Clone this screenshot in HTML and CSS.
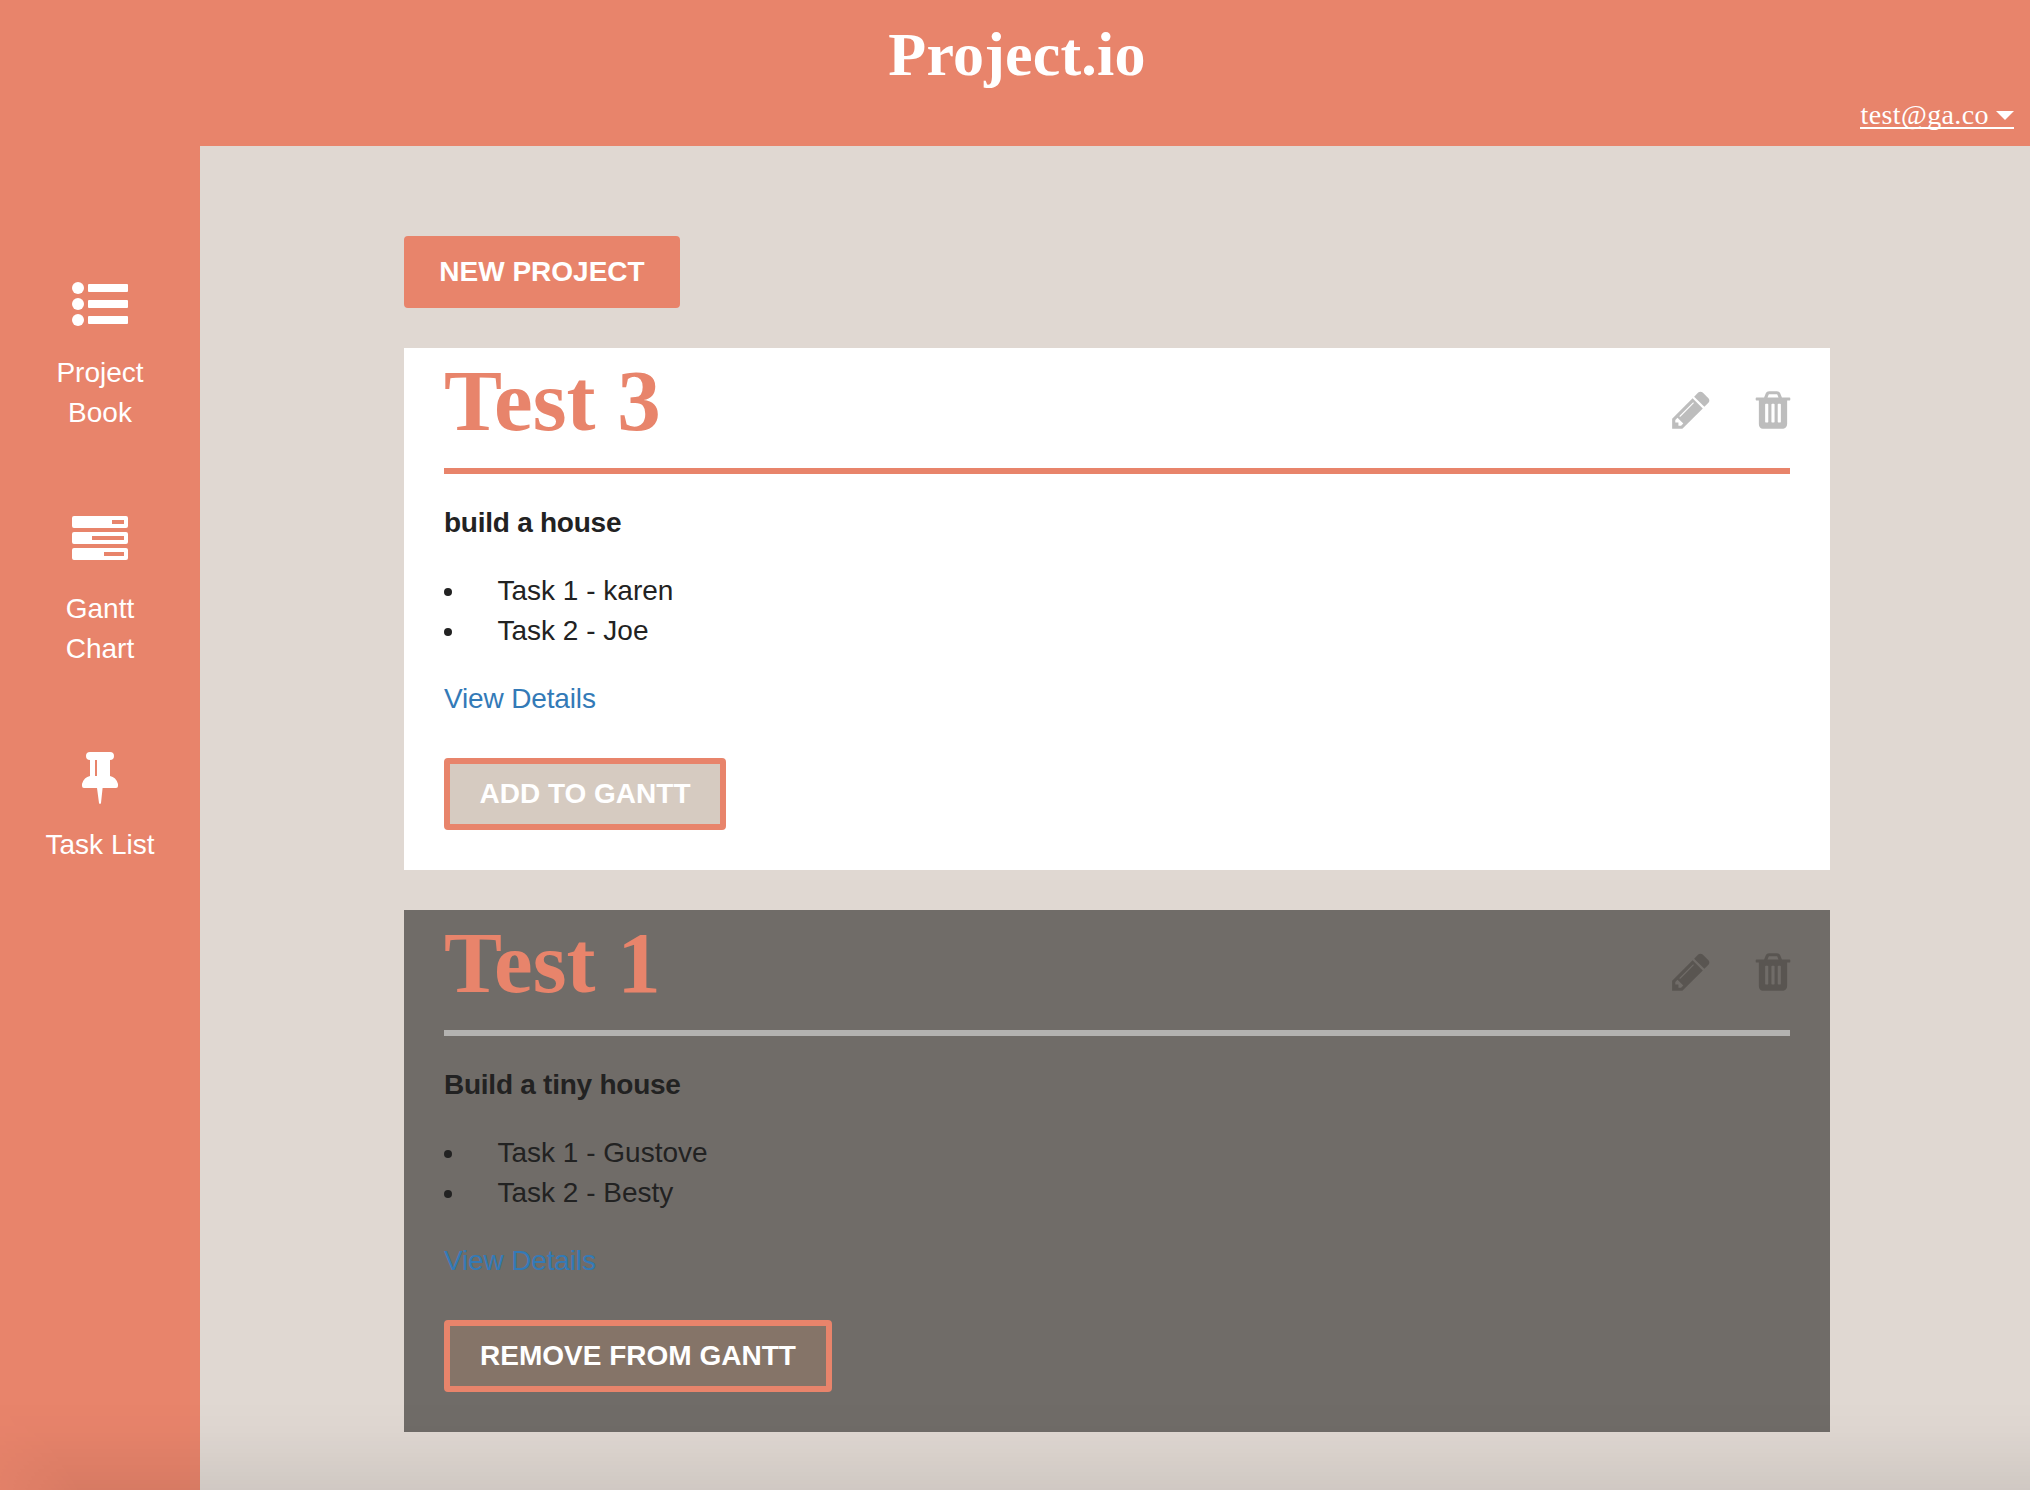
FILE: index.html
```html
<!DOCTYPE html>
<html lang="en">
<head>
<meta charset="utf-8">
<title>Project.io</title>
<link rel="stylesheet" href="styles.css">
</head>
<body>
<svg width="0" height="0" class="sprite" aria-hidden="true">
  <symbol id="pencil" viewBox="0 0 1792 1792"><path d="M491 1536l91-91-235-235-91 91v107h128v128h107zm523-928q0-22-22-22-10 0-17 7l-542 542q-7 7-7 17 0 22 22 22 10 0 17-7l542-542q7-7 7-17zm-54-192l416 416-832 832h-416v-416zm683 96q0 53-37 90l-166 166-416-416 166-165q36-38 90-38 53 0 91 38l235 234q37 39 37 91z"/></symbol>
  <symbol id="trash" viewBox="0 0 1792 1792"><path d="M704 1376v-704q0-14-9-23t-23-9h-64q-14 0-23 9t-9 23v704q0 14 9 23t23 9h64q14 0 23-9t9-23zm256 0v-704q0-14-9-23t-23-9h-64q-14 0-23 9t-9 23v704q0 14 9 23t23 9h64q14 0 23-9t9-23zm256 0v-704q0-14-9-23t-23-9h-64q-14 0-23 9t-9 23v704q0 14 9 23t23 9h64q14 0 23-9t9-23zm-544-992h448l-48-117q-7-9-17-11h-317q-10 2-17 11zm928 32v64q0 14-9 23t-23 9h-96v948q0 83-47 143.500t-113 60.500h-832q-66 0-113-58.500t-47-141.500v-952h-96q-14 0-23-9t-9-23v-64q0-14 9-23t23-9h309l70-167q15-37 54-63t79-26h320q40 0 79 26t54 63l70 167h309q14 0 23 9t9 23z"/></symbol>
</svg>
<header class="header">
  <h1 class="brand">Project.io</h1>
  <a class="account"><span class="account-name">test@ga.co</span><span class="caret"></span></a>
</header>
<div class="layout">
  <nav class="sidebar">
    <a class="nav-item">
      <svg class="nav-icon" width="56" height="52" viewBox="0 0 56 52"><circle cx="6" cy="8" r="6"/><circle cx="6" cy="24" r="6"/><circle cx="6" cy="40" r="6"/><rect x="16" y="4" width="40" height="8" rx="1"/><rect x="16" y="20" width="40" height="8" rx="1"/><rect x="16" y="36" width="40" height="8" rx="1"/></svg>
      <span>Project<br>Book</span>
    </a>
    <a class="nav-item">
      <svg class="nav-icon" width="56" height="52" viewBox="0 0 56 52"><path fill-rule="evenodd" d="M2 0H54a2 2 0 0 1 2 2V10a2 2 0 0 1-2 2H2a2 2 0 0 1-2-2V2a2 2 0 0 1 2-2zM40 4V8H52V4zM2 16H54a2 2 0 0 1 2 2V26a2 2 0 0 1-2 2H2a2 2 0 0 1-2-2V18a2 2 0 0 1 2-2zM20 20V24H52V20zM2 32H54a2 2 0 0 1 2 2V42a2 2 0 0 1-2 2H2a2 2 0 0 1-2-2V34a2 2 0 0 1 2-2zM32 36V40H52V36z"/></svg>
      <span>Gantt<br>Chart</span>
    </a>
    <a class="nav-item">
      <svg class="nav-icon" width="56" height="52" viewBox="0 0 56 52"><path fill-rule="evenodd" d="M18 0H38a4 4 0 0 1 0 8V24Q44 25 46 32V34Q46 36 44 36H30.600L29 51Q28 53 27 51L25 36H12Q10 36 10 34V32Q12 25 18 24V8a4 4 0 0 1 0-8zM23 8V24H25V8z"/></svg>
      <span>Task List</span>
    </a>
  </nav>
  <main class="content">
    <button class="btn btn-new">NEW PROJECT</button>
    <article class="card">
      <div class="card-head"><h2 class="card-title">Test 3</h2><div class="actions"><svg class="action"><use href="#pencil"/></svg><svg class="action"><use href="#trash"/></svg></div></div>
      <p class="summary">build a house</p>
      <ul class="tasks"><li>Task 1 - karen</li><li>Task 2 - Joe</li></ul>
      <a class="details">View Details</a>
      <button class="btn btn-add">ADD TO GANTT</button>
    </article>
    <article class="card card-dark">
      <div class="card-head"><h2 class="card-title">Test 1</h2><div class="actions"><svg class="action"><use href="#pencil"/></svg><svg class="action"><use href="#trash"/></svg></div></div>
      <p class="summary">Build a tiny house</p>
      <ul class="tasks"><li>Task 1 - Gustove</li><li>Task 2 - Besty</li></ul>
      <a class="details">View Details</a>
      <button class="btn btn-remove">REMOVE FROM GANTT</button>
    </article>
  </main>
</div>
<div class="bottom-shade"></div>
</body>
</html>
```
FILE: styles.css
```css
* { box-sizing: border-box; }
body {
  position: relative;
  display: flex;
  flex-direction: column;
  height: 1490px;
  margin: 0;
  overflow: hidden;
  background: #e0d8d2;
  color: #222;
  font: 28px/40px "Liberation Sans", Arial, sans-serif;
}
.sprite { display: none; }
h1, h2, p, ul { margin: 0; padding: 0; }
.header {
  display: flex;
  flex-direction: column;
  height: 146px;
  background: #e8846b;
  color: #fff;
  font-family: "Liberation Serif", serif;
}
.brand {
  height: 96px;
  padding: 20px 0 0 4px;
  text-align: center;
  font-size: 62px;
  line-height: 68px;
  letter-spacing: .2px;
}
.account {
  display: flex;
  align-items: center;
  align-self: flex-end;
  height: 32px;
  margin: 1px 16px 0 0;
  border-bottom: 2px solid #fff;
  letter-spacing: .4px;
}
.account-name { line-height: 32px; padding-top: 6px; }
.caret {
  margin: 6px 0 0 7px;
  border: 9px solid transparent;
  border-top-color: #fff;
  border-bottom: 0;
}
.layout { display: flex; flex: 1; }
.sidebar {
  display: flex;
  flex-direction: column;
  gap: 83px;
  width: 200px;
  padding-top: 134px;
  background: #e8846b;
  color: #fff;
}
.nav-item {
  display: flex;
  flex-direction: column;
  align-items: center;
  gap: 21px;
  text-align: center;
}
.nav-icon { fill: #fff; }
.content {
  display: flex;
  flex-direction: column;
  flex: 1;
  gap: 40px;
  padding: 90px 200px 0 204px;
}
.btn {
  align-self: flex-start;
  height: 72px;
  padding: 10px 30px;
  border: 6px solid #e8846b;
  border-radius: 4px;
  color: #fff;
  font: bold 28px/40px "Liberation Sans", Arial, sans-serif;
  white-space: nowrap;
}
.btn-new { width: 276px; padding: 10px 20px; background: #e8846b; }
.btn-add { width: 282px; padding: 10px 20px; background: #d6cbc1; }
.btn-remove { width: 388px; padding: 10px 20px; background: #857468; }
.card {
  display: flex;
  flex-direction: column;
  height: 522px;
  padding: 0 40px;
  background: #fff;
}
.card-head {
  display: flex;
  justify-content: space-between;
  height: 126px;
  border-bottom: 6px solid #e8846b;
}
.card-title {
  padding-top: 4px;
  color: #e8846b;
  font: bold 87px/98px "Liberation Serif", serif;
  letter-spacing: 0;
}
.actions { display: flex; gap: 38px; margin: 40px -5px 0 0; }
.action { width: 44px; height: 44px; fill: #bdbdbd; }
.summary { margin: 29px 0 28px; font-weight: bold; letter-spacing: -.25px; }
.tasks { list-style: none; margin-bottom: 28px; }
.tasks li { display: flex; align-items: center; gap: 45.500px; }
.tasks li::before {
  width: 8px;
  height: 8px;
  margin-top: 2px;
  border-radius: 50%;
  background: #222;
  content: "";
}
.details { margin-bottom: 39px; color: #337ab7; letter-spacing: -.15px; }
.card-dark { background: #706c68; }
.card-dark .card-head { border-color: #b3b2b0; }
.card-dark .action { fill: #595551; }
.bottom-shade {
  position: absolute;
  inset: auto 0 0 0;
  height: 90px;
  background: linear-gradient(rgba(0, 0, 0, 0), rgba(0, 0, 0, .012) 35%, rgba(0, 0, 0, .07));
  -webkit-mask-image: linear-gradient(60deg, rgba(0, 0, 0, .3), #000 70px);
  mask-image: linear-gradient(60deg, rgba(0, 0, 0, .3), #000 70px);
}
```
